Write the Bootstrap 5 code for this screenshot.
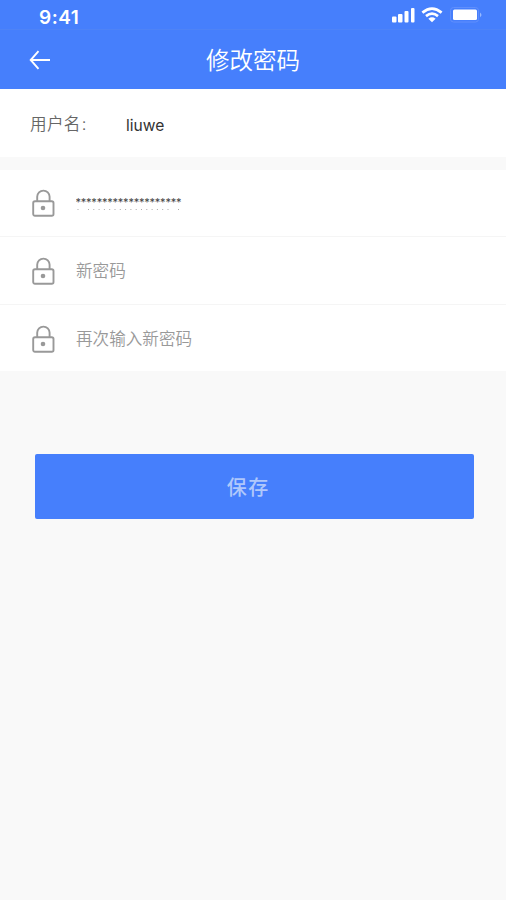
<!DOCTYPE html>
<html lang="zh-CN">
<head>
<meta charset="utf-8">
<meta name="viewport" content="width=device-width, initial-scale=1">
<title>修改密码</title>
<link href="https://cdn.jsdelivr.net/npm/bootstrap@5.3.0/dist/css/bootstrap.min.css" rel="stylesheet">
<style>
body{background:#f9f9f9;font-family:Inter,"Noto Sans CJK SC",sans-serif;min-height:900px;overflow-x:hidden}
.app-head{background:#467ffc;height:89px}
.status{height:29px;padding:0 23px 0 39px}
.clock{font-size:19px;line-height:35px;font-weight:600;letter-spacing:.5px}
.signals{padding-top:7px;gap:6px}
.titlebar{height:60px;display:grid;grid-template-columns:50px 1fr 50px;padding:0 29px;border-top:1px solid #4e83f6}
.page-title{font-size:23.5px;line-height:58px;padding-bottom:1px;font-weight:350;font-family:"Noto Sans CJK SC",sans-serif}
.user-row{height:68px;padding:0 30px;font-size:16.6px;color:#666;font-weight:350}
.user-label{width:96px;line-height:70px;letter-spacing:.3px}
.user-label span{margin-left:1px}
.user-name{color:#333;font-size:15.6px;line-height:74px;font-weight:400}
.fields{margin-top:13px}
.field-row{height:67px;padding:0 32px;border:0;border-bottom:1px solid #f5f5f5;background:#fff}
.field-row:nth-child(2){height:68px}
.field-row:last-child{height:66px;border-bottom:0;padding-top:2px}
.field-row input{font-size:16.6px;font-weight:350;color:#333;margin-left:21px;line-height:24px;height:30px}
.field-row input::placeholder{color:#999;opacity:1}
.stars{margin-left:21px}
.save{margin:83px 32px 0 35px;height:65px;width:438.5px;padding:3px 12px 0 0;background:#467ffc;border:0;border-radius:2px;color:#b0c8fb;font-size:20px;letter-spacing:1.5px;font-weight:500}
.save:hover{background:#467ffc;color:#b0c8fb}
</style>
<script src="https://cdn.jsdelivr.net/npm/bootstrap@5.3.0/dist/js/bootstrap.bundle.min.js"></script>
</head>
<body>
<svg class="d-none">
  <symbol id="lock" viewBox="0 0 23 28"><g fill="none" stroke="#999" stroke-width="1.9"><rect x="1.2" y="12.2" width="20.3" height="14.6" rx="1.8"/><path d="M5.2 12V7.8a6.2 6.2 0 0 1 12.4 0V12"/></g><circle cx="11" cy="19" r="2.3" fill="#999"/></symbol>
</svg>
<header class="app-head text-white">
  <div class="status d-flex justify-content-between align-items-start">
    <span class="clock">9:41</span>
    <div class="signals d-flex align-items-start">
      <svg width="24" height="16" fill="#fff"><rect x="1" y="9.5" width="4.5" height="6" rx="1"/><rect x="7" y="7" width="4.5" height="8.5" rx="1"/><rect x="13.5" y="4" width="4" height="11.5" rx="1"/><rect x="20" y="1" width="3.5" height="14.5" rx="1"/></svg>
      <svg width="22" height="16" fill="none" stroke="#fff" stroke-width="2.7"><path d="M1.4 5.6Q11 -2.4 20.6 5.6"/><path d="M5 9.1Q11 4.3 17 9.1"/><path d="M7.4 11.7Q11 9 14.6 11.7L11 15.3Z" fill="#fff" stroke="none"/></svg>
      <svg width="34" height="16"><rect x="1.5" y=".5" width="28" height="14.5" rx="3" fill="none" stroke="#608ffc"/><rect x="4" y="2.5" width="24" height="10.5" rx="1.5" fill="#fff"/><path d="M31 5.5q3 2.4 0 4.8z" fill="#98b9fe"/></svg>
    </div>
  </div>
  <div class="titlebar align-items-center">
    <svg width="22" height="20" fill="none" stroke="#fff" stroke-width="1.9"><path d="M9.5 1.2L1.7 10l7.8 8.8M1.7 10H21"/></svg>
    <h1 class="page-title text-center m-0">修改密码</h1>
  </div>
</header>
<main>
  <section class="user-row bg-white d-flex">
    <span class="user-label">用户名<span>:</span></span>
    <span class="user-name">liuwe</span>
  </section>
  <form>
    <div class="fields list-group list-group-flush rounded-0">
      <label class="field-row list-group-item d-flex align-items-center">
        <svg class="flex-shrink-0" width="23" height="28"><use href="#lock"/></svg>
        <svg class="stars" width="108" height="23" fill="#444" font-family="Inter,sans-serif"><text x="-.5" y="13.5" font-size="11" textLength="106">********************</text><path d="M1.5 17.5h1M12 17.5h81M102 17.5h1" stroke="#aaa" stroke-width="1" stroke-dasharray="1 4.3"/></svg>
      </label>
      <label class="field-row list-group-item d-flex align-items-center">
        <svg class="flex-shrink-0" width="23" height="28"><use href="#lock"/></svg>
        <input class="form-control-plaintext p-0" type="password" placeholder="新密码">
      </label>
      <label class="field-row list-group-item d-flex align-items-center">
        <svg class="flex-shrink-0" width="23" height="28"><use href="#lock"/></svg>
        <input class="form-control-plaintext p-0" type="password" placeholder="再次输入新密码">
      </label>
    </div>
    <button type="button" class="save btn">保存</button>
  </form>
</main>
</body>
</html>
